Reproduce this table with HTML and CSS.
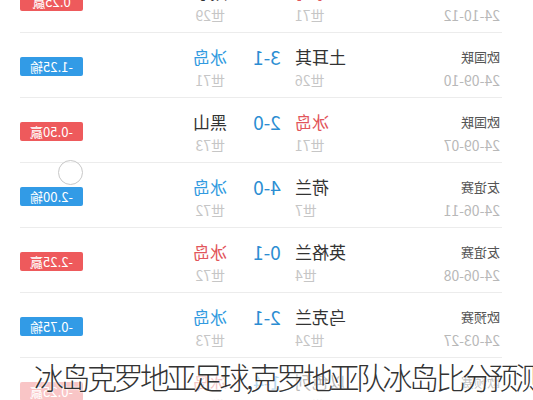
FILE: index.html
```html
<!DOCTYPE html>
<html lang="zh-CN">
<head>
    <meta charset="UTF-8">
    <meta name="viewport" content="width=device-width, initial-scale=1.0">
    <title>冰岛近期战绩</title>
    <link rel="stylesheet" href="styles.css">
</head>
<body>
    <div class="page">
        <!-- 截图本身是左右翻转的，列表整体镜像 -->
        <ul class="match-list">
            <li class="match">
                <div class="info">
                    <div class="comp">欧国联</div>
                    <div class="date">24-10-12</div>
                </div>
                <div class="team home">
                    <div class="name win">冰岛</div>
                    <div class="rank">世71</div>
                </div>
                <div class="score">2-2</div>
                <div class="team away">
                    <div class="name">威尔士</div>
                    <div class="rank">世29</div>
                </div>
                <span class="badge red">0.25赢</span>
            </li>
            <li class="match">
                <div class="info">
                    <div class="comp">欧国联</div>
                    <div class="date">24-09-10</div>
                </div>
                <div class="team home">
                    <div class="name">土耳其</div>
                    <div class="rank">世26</div>
                </div>
                <div class="score">3-1</div>
                <div class="team away">
                    <div class="name lose">冰岛</div>
                    <div class="rank">世71</div>
                </div>
                <span class="badge blue">-1.25输</span>
            </li>
            <li class="match">
                <div class="info">
                    <div class="comp">欧国联</div>
                    <div class="date">24-09-07</div>
                </div>
                <div class="team home">
                    <div class="name win">冰岛</div>
                    <div class="rank">世71</div>
                </div>
                <div class="score">2-0</div>
                <div class="team away">
                    <div class="name">黑山</div>
                    <div class="rank">世73</div>
                </div>
                <span class="badge red">-0.50赢</span>
            </li>
            <li class="match">
                <div class="info">
                    <div class="comp">友谊赛</div>
                    <div class="date">24-06-11</div>
                </div>
                <div class="team home">
                    <div class="name">荷兰</div>
                    <div class="rank">世7</div>
                </div>
                <div class="score">4-0</div>
                <div class="team away">
                    <div class="name lose">冰岛</div>
                    <div class="rank">世72</div>
                </div>
                <span class="badge blue">-2.00输</span>
            </li>
            <li class="match">
                <div class="info">
                    <div class="comp">友谊赛</div>
                    <div class="date">24-06-08</div>
                </div>
                <div class="team home">
                    <div class="name">英格兰</div>
                    <div class="rank">世4</div>
                </div>
                <div class="score">0-1</div>
                <div class="team away">
                    <div class="name win">冰岛</div>
                    <div class="rank">世72</div>
                </div>
                <span class="badge red">-2.25赢</span>
            </li>
            <li class="match">
                <div class="info">
                    <div class="comp">欧预赛</div>
                    <div class="date">24-03-27</div>
                </div>
                <div class="team home">
                    <div class="name">乌克兰</div>
                    <div class="rank">世24</div>
                </div>
                <div class="score">2-1</div>
                <div class="team away">
                    <div class="name lose">冰岛</div>
                    <div class="rank">世73</div>
                </div>
                <span class="badge blue">-0.75输</span>
            </li>
            <li class="match">
                <div class="info">
                    <div class="comp">欧预赛</div>
                    <div class="date">24-03-22</div>
                </div>
                <div class="team home">
                    <div class="name">以色列</div>
                    <div class="rank">世75</div>
                </div>
                <div class="score">1-4</div>
                <div class="team away">
                    <div class="name win">冰岛</div>
                    <div class="rank">世73</div>
                </div>
                <span class="badge red">-0.25赢</span>
            </li>
        </ul>

        <div class="touch-dot"></div>
        <h1 class="caption">冰岛克罗地亚足球,克罗地亚队冰岛比分预测</h1>
    </div>
</body>
</html>
```

FILE: styles.css
```css
* {
    box-sizing: border-box;
    margin: 0;
    padding: 0;
}

body {
    font-family: "Noto Sans CJK SC", "Noto Sans", sans-serif;
    background: #ffffff;
    color: #333333;
    overflow: hidden;
}

.page {
    position: relative;
    width: 533px;
    height: 400px;
    overflow: hidden;
}

.match-list {
    list-style: none;
    margin-top: -32px;
    transform: scaleX(-1);
}

.match {
    display: flex;
    align-items: flex-start;
    height: 65px;
    margin: 0 20px 0 31px;
    padding-top: 12px;
    border-bottom: 1px solid #ececec;
}

.info {
    width: 119px;
    padding-left: 2px;
}

.comp {
    font-size: 13px;
    line-height: 24px;
    color: #555555;
}

.date {
    font-size: 14px;
    line-height: 22px;
    color: #b8b8b8;
}

.team {
    width: 88px;
}

.home {
    text-align: right;
}

.away {
    flex: 1;
    padding-left: 12px;
}

.name {
    font-size: 17px;
    line-height: 24px;
    color: #333333;
}

.name.win {
    color: #e2555b;
}

.name.lose {
    color: #329be0;
}

.rank {
    font-size: 14px;
    line-height: 22px;
    color: #c6c6c6;
}

.away .rank {
    padding-left: 2px;
}

.score {
    width: 56px;
    text-align: center;
    font-size: 19px;
    line-height: 24px;
    color: #2b8dd2;
}

.badge {
    align-self: center;
    width: 63px;
    height: 19px;
    margin-top: -9px;
    border-radius: 2px;
    font-size: 13px;
    line-height: 19px;
    text-align: center;
    color: #ffffff;
}

.badge.red {
    background: #ee5a5c;
}

.badge.blue {
    background: #329be6;
}

.touch-dot {
    position: absolute;
    left: 58px;
    top: 160px;
    width: 25px;
    height: 25px;
    border: 1.5px solid #c8c8c8;
    border-radius: 50%;
    background: rgba(255, 255, 255, 0.3);
}

.caption {
    position: absolute;
    left: 0;
    right: 0;
    top: 358px;
    bottom: 0;
    padding-left: 34px;
    white-space: nowrap;
    font-size: 30px;
    line-height: 36px;
    font-weight: 300;
    letter-spacing: -3.5px;
    color: #333333;
    background: rgba(255, 255, 255, 0.65);
    text-shadow: 0 0 2px #ffffff, 0 0 2px #ffffff;
}
```
